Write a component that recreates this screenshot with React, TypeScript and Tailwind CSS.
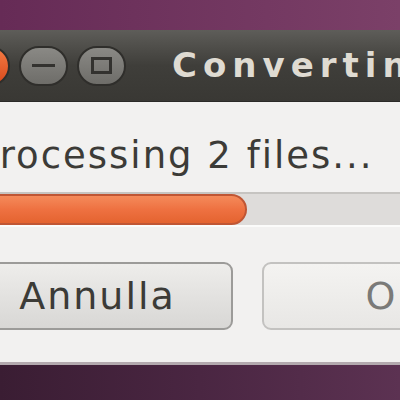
import React from "react";

const WindowButton: React.FC<{ kind: "close" | "min" | "max" }> = ({ kind }) => {
  if (kind === "close") {
    return (
      <div className="w-[49px] h-[40px] shrink-0 rounded-full border-2 border-[#2f2e2b] bg-gradient-to-b from-[#f47b43] to-[#d9481a]" />
    );
  }
  return (
    <div className="w-[49px] h-[40px] shrink-0 rounded-full border-2 border-[#2f2e2b] bg-gradient-to-b from-[#8a8985] to-[#6e6d69] flex items-center justify-center">
      {kind === "min" ? (
        <div className="w-[23px] h-[3px] bg-[#33322f]" />
      ) : (
        <div className="w-[21px] h-[17px] border-[3px] border-[#33322f]" />
      )}
    </div>
  );
};

export default function App() {
  const progress = 0.62;

  return (
    <div
      className="w-[400px] h-[400px] overflow-hidden flex flex-col bg-[#f2f1f0]"
      style={{ fontFamily: '"DejaVu Sans", sans-serif' }}
    >
      {/* desktop above window */}
      <div className="h-[30px] shrink-0 bg-gradient-to-r from-[#662b56] to-[#7b4068]" />

      {/* Title bar */}
      <div className="h-[72px] shrink-0 flex items-center bg-gradient-to-b from-[#5e5d59] via-[#3f3e3a] to-[#393834] border-b border-[#2b2a27]">
        <div className="flex items-center gap-[9px] -ml-[39px] shrink-0">
          <WindowButton kind="close" />
          <WindowButton kind="min" />
          <WindowButton kind="max" />
        </div>
        <span className="ml-[46px] -mt-[2px] whitespace-nowrap text-[34px] leading-none font-bold tracking-[6px] text-[#dfdbd2]">
          Converting
        </span>
      </div>

      {/* Dialog body */}
      <div className="flex-1 flex flex-col border-b-[3px] border-[#b3a9ae]">
        <div className="mt-[35px] -ml-[24px] whitespace-nowrap text-[37px] leading-none tracking-[2px] text-[#3c3b37]">
          Processing 2 files...
        </div>

        <div className="mt-[18px] h-[35px] -ml-[20px] w-[430px] shrink-0 bg-[#dedcda] border-t-2 border-[#c6c4c1] border-b-2 border-b-[#fbfbfa] flex">
          <div
            className="h-full rounded-r-full bg-gradient-to-b from-[#f58a5a] via-[#ee7141] to-[#e4632f] border-2 border-[#c05634]"
            style={{ width: `${267 * (progress / 0.62)}px` }}
          />
        </div>

        <div className="mt-[35px] flex gap-[29px] shrink-0">
          <button className="-ml-[38px] w-[271px] h-[68px] shrink-0 rounded-[9px] border-2 border-[#9c9b99] bg-gradient-to-b from-[#eeedeb] to-[#d8d7d5] text-[38px] tracking-[2px] text-[#3c3b37] flex items-center justify-center">
            Annulla
          </button>
          <button className="w-[266px] h-[68px] shrink-0 rounded-[9px] border-2 border-[#c3c2c0] bg-gradient-to-b from-[#f4f3f1] to-[#e8e7e5] text-[38px] tracking-[2px] text-[#7a7a78] flex items-center justify-center">
            OK
          </button>
        </div>
      </div>

      {/* desktop below window */}
      <div className="h-[35px] shrink-0 bg-gradient-to-r from-[#3a1d33] via-[#4a2642] to-[#5c3252]" />
    </div>
  );
}
